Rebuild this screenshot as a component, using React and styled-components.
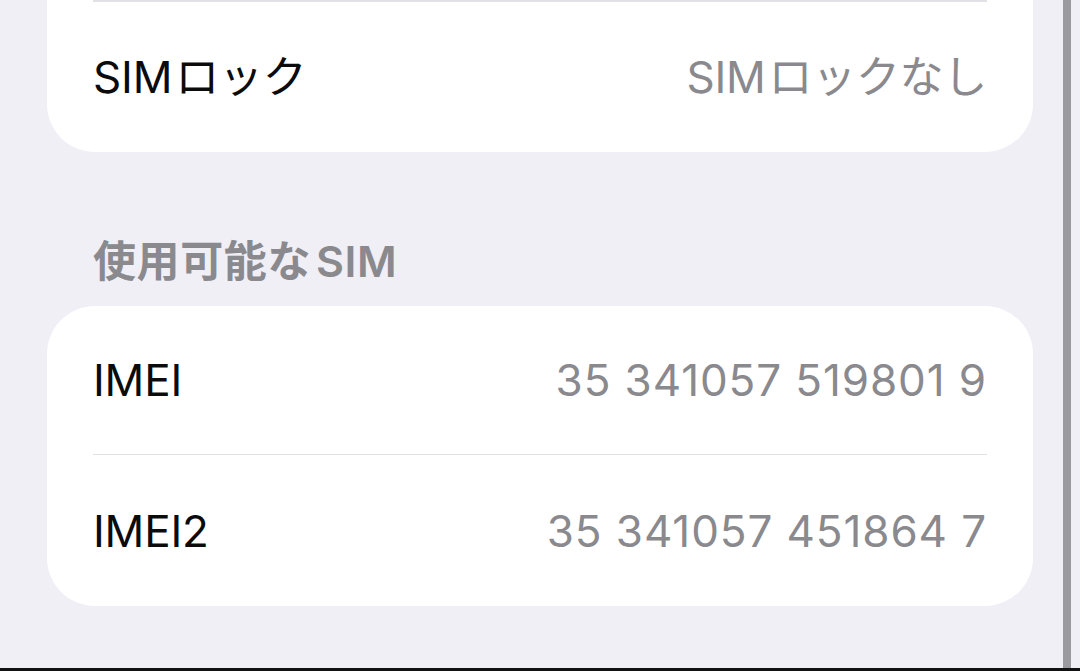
import React from "react";
import styled, { createGlobalStyle } from "styled-components";

const Global = createGlobalStyle`
  html, body { margin: 0; padding: 0; background: #f0eff5; }
  body {
    font-family: Inter, "Noto Sans CJK JP", sans-serif;
    -webkit-font-smoothing: antialiased;
  }
`;

const Screen = styled.div`
  width: 1080px;
  height: 671px;
  display: flex;
  flex-direction: column;
  overflow: hidden;
  background: #f0eff5;
`;

const Main = styled.div`
  flex: 1;
  display: flex;
  min-height: 0;
`;

const Content = styled.div`
  flex: 1;
  padding: 0 30px 0 47px;
  display: flex;
  flex-direction: column;
`;

const ScrollBar = styled.div`
  width: 8px;
  margin-right: 9px;
  background: #9b9a9f;
`;

const BottomEdge = styled.div`
  height: 3px;
  background: #111;
`;

const Card = styled.div`
  background: #ffffff;
  border-radius: ${(p) => (p.$cutTop ? "0 0 48px 48px" : "48px")};
  padding: 0 46px;
  display: flex;
  flex-direction: column;
`;

const Separator = styled.div`
  height: ${(p) => p.$h || 1}px;
  background: #e2e2e6;
`;

const Row = styled.div`
  height: ${(p) => p.$h}px;
  display: flex;
  align-items: center;
  justify-content: space-between;
  font-size: 44px;
  line-height: 1;
  letter-spacing: -0.2px;
`;

const Label = styled.span`
  color: #0b0b0c;
`;

const Value = styled.span`
  color: #8a898e;
  letter-spacing: ${(p) => (p.$digits ? "0.9px" : "-0.3px")};
`;

const Latin = styled.span`
  margin-right: ${(p) => (p.$after ? "0" : "3px")};
  margin-left: ${(p) => (p.$after ? "5px" : "0")};
`;

const SectionHeader = styled.div`
  padding: 87px 46px 23px;
  font-size: 43px;
  line-height: 44px;
  font-weight: 600;
  letter-spacing: 0.6px;
  color: #8a898e;
`;

export default function App() {
  return (
    <Screen>
      <Global />
      <Main>
        <Content>
          <Card $cutTop>
            <Separator $h={2} />
            <Row $h={150}>
              <Label><Latin>SIM</Latin>ロック</Label>
              <Value><Latin>SIM</Latin>ロックなし</Value>
            </Row>
          </Card>
          <SectionHeader>使用可能な<Latin $after>SIM</Latin></SectionHeader>
          <Card>
            <Row $h={148}>
              <Label>IMEI</Label>
              <Value $digits>35 341057 519801 9</Value>
            </Row>
            <Separator />
            <Row $h={151}>
              <Label>IMEI2</Label>
              <Value $digits>35 341057 451864 7</Value>
            </Row>
          </Card>
        </Content>
        <ScrollBar />
      </Main>
      <BottomEdge />
    </Screen>
  );
}
